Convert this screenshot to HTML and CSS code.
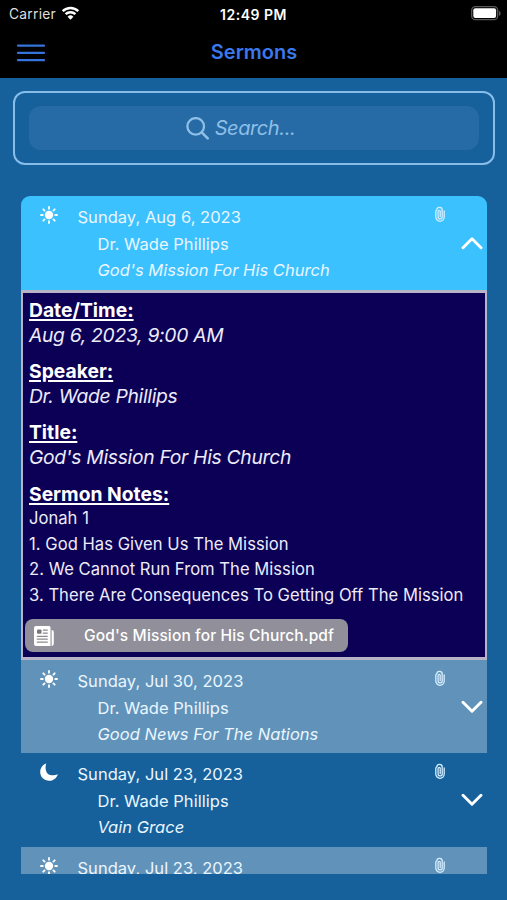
FILE: index.html
```html
<!DOCTYPE html>
<html lang="en">
<head>
<meta charset="utf-8">
<title>Sermons</title>
<link rel="stylesheet" href="styles.css">
</head>
<body>
<svg class="defs" width="0" height="0" aria-hidden="true">
  <symbol id="sun" viewBox="0 0 18 18">
    <circle cx="9" cy="9" r="4.2" fill="currentColor"/>
    <path d="M9 1v1.800M9 15.200v1.800M1 9h1.800M15.200 9h1.800M3.300 3.300l1.300 1.300M13.400 13.400l1.300 1.300M3.300 14.700l1.300-1.300M13.400 4.600l1.300-1.300" fill="none" stroke="currentColor" stroke-width="1.800" stroke-linecap="round"/>
  </symbol>
  <symbol id="moon" viewBox="0 0 18 18">
    <path d="M6.200.4C4.600 5.500 6 12.300 12 12.300c2.200 0 4-.4 5.900-1.100C16.500 15.400 13.200 17.800 9.200 17.800 4.200 17.800.2 14 .2 9.100.2 5 2.500 1.800 6.200.4z" fill="currentColor"/>
  </symbol>
  <symbol id="clip" viewBox="0 0 10 16">
    <path d="M3.600 4.800q1.600-.9 1.600.7v5.200M3.100 5.200v5.700a2 2 0 0 0 4.100 0V4.300a2.700 2.700 0 0 0-5.400-.4Q.8 4.300.8 5.500v5.600a4.200 4.200 0 0 0 8.400 0V5" fill="none" stroke="currentColor" stroke-width="1.300" stroke-linecap="round"/>
  </symbol>
  <symbol id="down" viewBox="0 0 22 14">
    <path d="M2 2.300l9 9 9-9" fill="none" stroke="currentColor" stroke-width="2.900" stroke-linecap="round" stroke-linejoin="round"/>
  </symbol>
</svg>
<header class="top">
  <div class="status">
    <div class="carrier"><span>Carrier</span>
      <svg class="wifi" viewBox="0 0 18 14"><path d="M1.200 5.100a11.200 11.200 0 0 1 15.600 0M4.100 8.200a7 7 0 0 1 9.800 0" fill="none" stroke="#fff" stroke-width="2.500"/><path d="M9 13.700l-2.900-3a4.200 4.200 0 0 1 5.800 0z" fill="#fff"/></svg>
    </div>
    <div class="clock">12:49 PM</div>
    <svg class="battery" viewBox="0 0 30 15"><rect x=".7" y=".7" width="26" height="13" rx="3.800" fill="#000" stroke="#59595b" stroke-width="1.300"/><rect x="2.300" y="2.300" width="22.800" height="9.800" rx="2" fill="#fff"/><path d="M28 5c2.200.6 2.200 4.200 0 4.800z" fill="#59595b"/></svg>
  </div>
  <nav class="nav">
    <svg class="menu" viewBox="0 0 29 18"><path d="M2 1.600h26M2 8.900h26M2 16.200h26" stroke="#3474dc" stroke-width="2.300" stroke-linecap="round"/></svg>
    <h1>Sermons</h1>
  </nav>
</header>
<main>
  <div class="search"><div class="field">
    <svg class="glass" viewBox="0 0 23 23"><circle cx="9.700" cy="9.400" r="8.300" fill="none" stroke="currentColor" stroke-width="2.300"/><path d="M15.700 15.400l6 6" stroke="currentColor" stroke-width="2.600" stroke-linecap="round"/></svg>
    <span>Search...</span>
  </div></div>
  <section class="list">
    <article class="row open">
      <svg class="when"><use href="#sun"/></svg>
      <div class="text"><p class="date">Sunday, Aug 6, 2023</p><p class="who">Dr. Wade Phillips</p><p class="title">God's Mission For His Church</p></div>
      <svg class="clip"><use href="#clip"/></svg><svg class="chev up"><use href="#down"/></svg>
    </article>
    <div class="details">
      <h2>Date/Time:</h2><p class="value">Aug 6, 2023, 9:00 AM</p>
      <h2>Speaker:</h2><p class="value">Dr. Wade Phillips</p>
      <h2>Title:</h2><p class="value">God's Mission For His Church</p>
      <h2>Sermon Notes:</h2>
      <div class="notes"><p>Jonah 1</p><p>1. God Has Given Us The Mission</p><p>2. We Cannot Run From The Mission</p><p>3. There Are Consequences To Getting Off The Mission</p></div>
      <div class="file">
        <svg class="paper" viewBox="0 0 20 20"><path d="M2 0h13q1.500 0 1.500 1.500V20H2q-2 0-2-2V2Q0 0 2 0z" fill="#fff"/><path d="M17.600 4q2.200 0 2.200 2v11q0 3-2.200 3z" fill="#fff"/><rect x="3" y="3.500" width="4.500" height="4.200" rx="1" fill="#77777d"/><path d="M9.300 4.200h4M9.300 7.200h4M3.300 10.300h10M3.300 13.200h10M3.300 16.200h10" stroke="#8b8a91" stroke-width="1.200" stroke-linecap="round"/></svg>
        <span>God's Mission for His Church.pdf</span>
      </div>
    </div>
    <article class="row alt">
      <svg class="when"><use href="#sun"/></svg>
      <div class="text"><p class="date">Sunday, Jul 30, 2023</p><p class="who">Dr. Wade Phillips</p><p class="title">Good News For The Nations</p></div>
      <svg class="clip"><use href="#clip"/></svg><svg class="chev"><use href="#down"/></svg>
    </article>
    <article class="row">
      <svg class="when"><use href="#moon"/></svg>
      <div class="text"><p class="date">Sunday, Jul 23, 2023</p><p class="who">Dr. Wade Phillips</p><p class="title">Vain Grace</p></div>
      <svg class="clip"><use href="#clip"/></svg><svg class="chev"><use href="#down"/></svg>
    </article>
    <article class="row alt">
      <svg class="when"><use href="#sun"/></svg>
      <div class="text"><p class="date">Sunday, Jul 23, 2023</p></div>
      <svg class="clip"><use href="#clip"/></svg>
    </article>
  </section>
</main>
</body>
</html>
```
FILE: styles.css
```css
* { box-sizing: border-box; margin: 0; padding: 0; }
body { width: 507px; height: 900px; overflow: hidden; background: #16609b; color: #fff; font-family: Inter, sans-serif; }
.defs { display: none; }
svg { display: block; flex: none; }
.top { height: 78px; background: #000; }
.status { height: 28px; display: grid; grid-template-columns: 1fr auto 1fr; align-items: center; padding: 0 6px 0 9px; }
.carrier { display: flex; align-items: center; gap: 5px; font-size: 13.800px; color: #dedede; letter-spacing: .25px; }
.wifi { width: 19px; height: 14px; margin-top: -2px; }
.clock { font-size: 14px; font-weight: 600; letter-spacing: .5px; margin-left: -3px; }
.battery { width: 30px; height: 15px; justify-self: end; margin-top: -1px; }
.nav { height: 50px; display: grid; grid-template-columns: 29px 1fr 29px; align-items: center; padding: 0 16px; }
.menu { width: 29px; height: 18px; }
.nav h1 { font-size: 20px; font-weight: 600; line-height: 24px; text-align: center; color: #3b78ec; padding: 0 0 2px 1px; }
.search { height: 74px; margin: 13px 12px 0 13px; padding: 13px 14px 13px; border: 2px solid #86bde9; border-radius: 12px; }
.field { height: 44px; border-radius: 12px; background: #266ba6; display: flex; align-items: center; justify-content: center; gap: 6px; padding-right: 27px; font-size: 20px; letter-spacing: -.4px; font-style: italic; color: #8fbfe6; }
.glass { width: 23px; height: 23px; }
.list { margin: 31px 20px 0 21px; height: 678px; overflow: hidden; border-radius: 9px 9px 0 0; }
.row { height: 93.500px; display: grid; grid-template-columns: 18px 1fr 10px 22px; column-gap: 19px; padding: 9px 5px 0 18.500px; align-items: start; color: #eaf6ff; }
.row.open { background: #3cc1ff; }
.row.alt { background: #6193ba; }
.when { width: 18px; height: 18px; color: #fff; margin-top: 1px; }
.text { padding-left: 1px; font-size: 16.500px; letter-spacing: .03px; white-space: nowrap; }
.text p { line-height: 24px; }
.who { margin: 3px 0 0 20px; }
.title { margin: 2px 0 0 20px; font-style: italic; }
.clip { width: 10px; height: 16px; color: #d5eeff; margin: 1px 0 0 4px; }
.chev { width: 22px; height: 14px; color: #fff; margin: 31px 0 0 .5px; }
.chev.up { transform: scaleY(-1); }
.details { height: 370px; background: #0c0056; border: solid #b8b3c6; border-width: 3px 2px; padding: 5.500px 2px 0 6px; color: #ecebf9; white-space: nowrap; }
.details h2 { font-size: 19.300px; line-height: 25px; font-weight: 700; text-decoration: underline; text-decoration-thickness: 1.500px; text-underline-offset: 2px; color: #fff; }
.value { font-size: 19.300px; letter-spacing: -.3px; font-style: italic; line-height: 24px; margin-bottom: 12.200px; }
.notes { font-size: 16.600px; letter-spacing: .02px; line-height: 25.600px; margin-top: -.5px; }
.file { width: 323px; height: 33px; margin: 11px 0 0 -4px; background: #918f99; border-radius: 8px; display: flex; align-items: center; padding-left: 9px; gap: 30px; font-size: 15.500px; letter-spacing: .13px; font-weight: 500; color: #fff; }
.paper { width: 20px; height: 20px; }
```
